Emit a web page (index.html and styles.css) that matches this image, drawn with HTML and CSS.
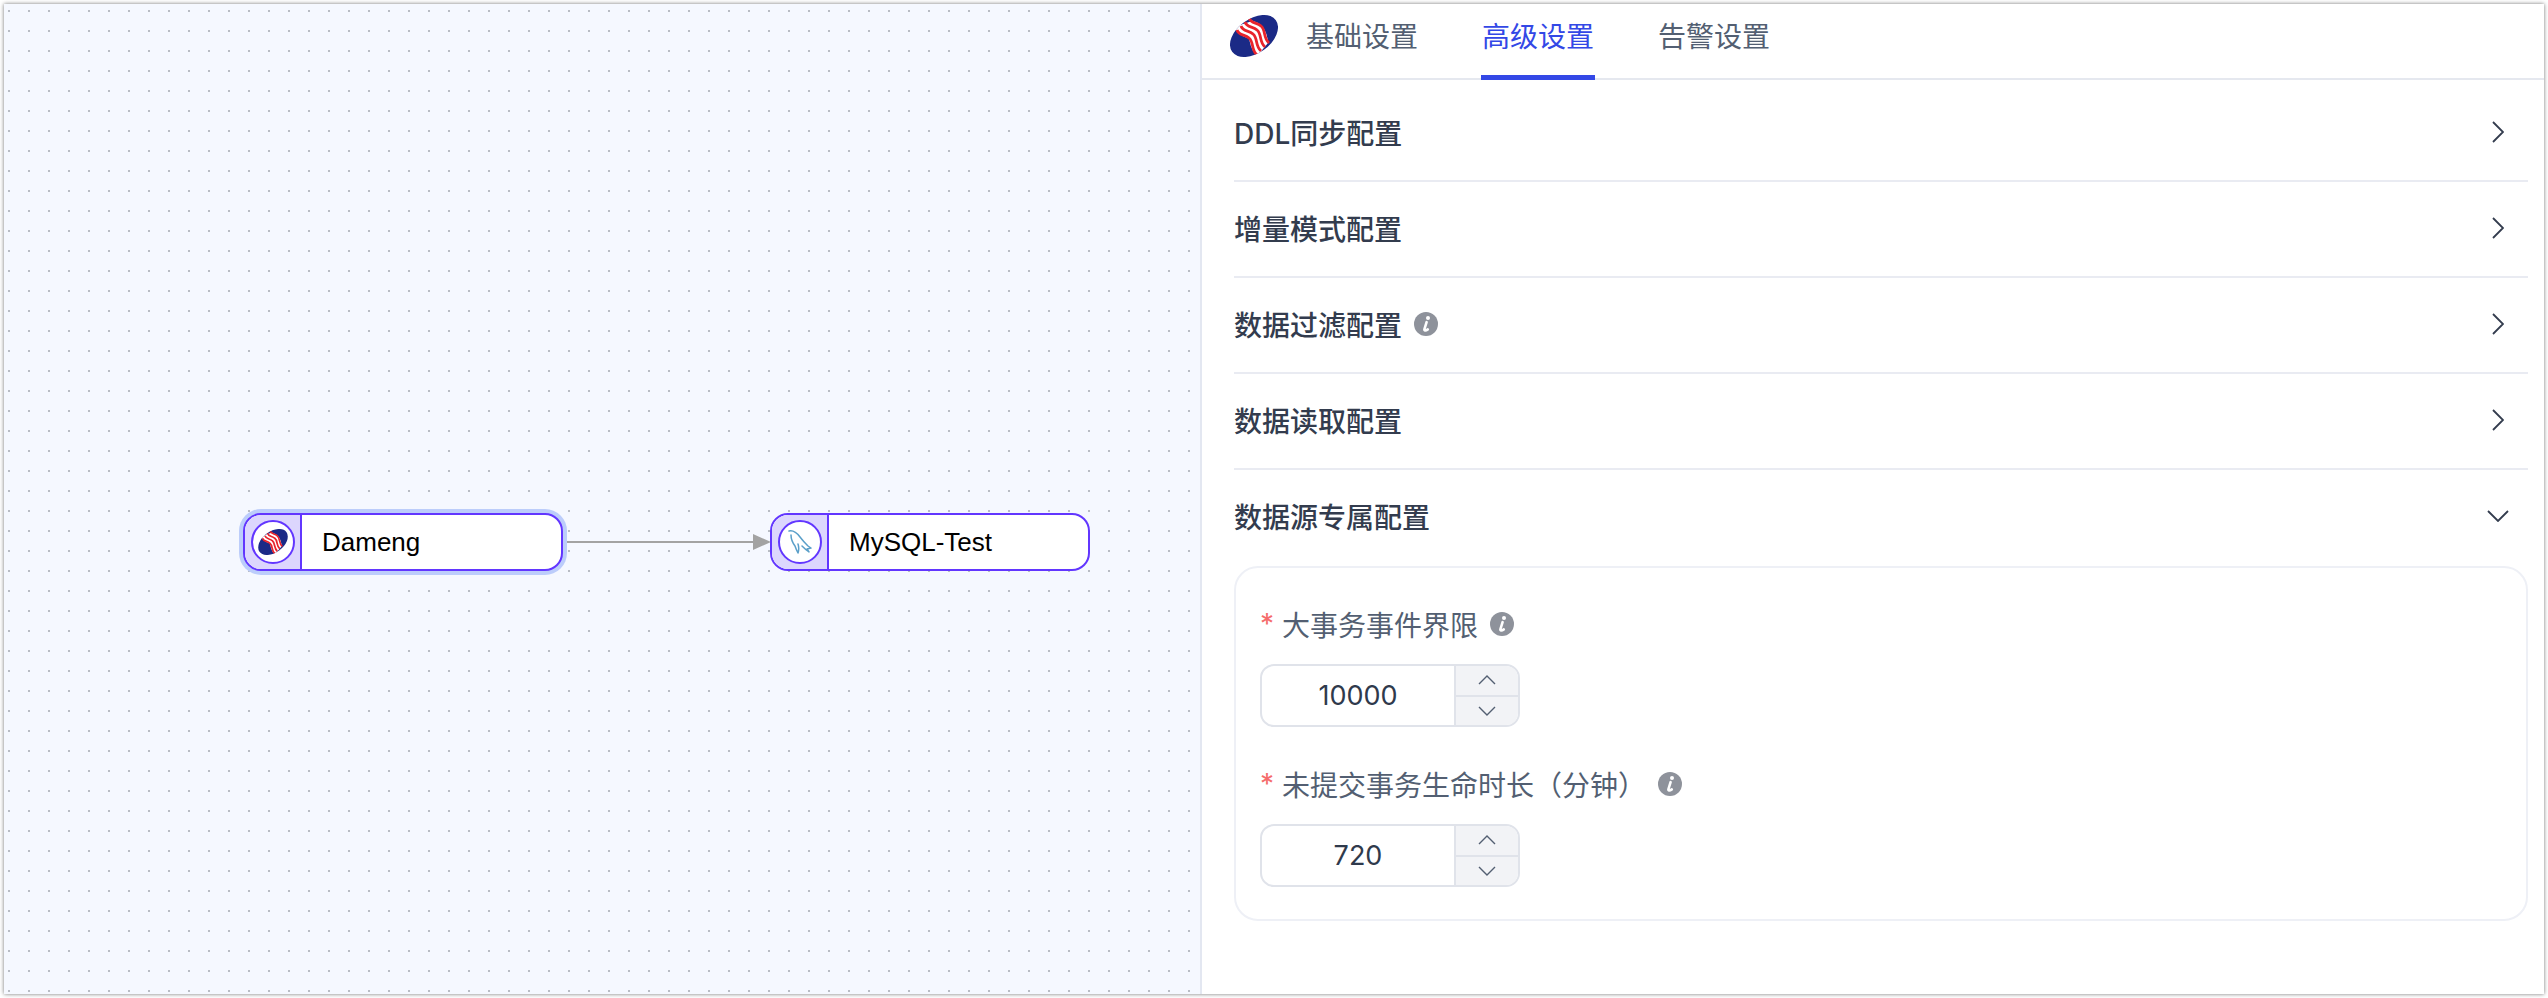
FILE: index.html
```html
<!DOCTYPE html>
<html lang="zh-CN">
<head>
  <meta charset="UTF-8">
  <title>高级设置</title>
  <link rel="stylesheet" href="styles.css">
</head>
<body>

<svg class="sprites" width="0" height="0">
  <defs>
    <clipPath id="dameng-clip">
      <ellipse cx="24" cy="21" rx="27" ry="17" transform="rotate(-36 24 21)"/>
    </clipPath>
    <path id="dameng-wave" d="M7 15C9 21 15 19 19 23C24 27 21 35 27 40"/>
  </defs>
  <symbol id="dameng" viewBox="0 0 48 42">
    <g clip-path="url(#dameng-clip)">
      <rect width="48" height="42" fill="#1b2a86"/>
      <use href="#dameng-wave" transform="translate(6 -6)" fill="none" stroke="#fff" stroke-width="18"/>
      <g fill="none" stroke="#e8232b" stroke-width="2.8">
        <use href="#dameng-wave"/>
        <use href="#dameng-wave" transform="translate(4 -4)"/>
        <use href="#dameng-wave" transform="translate(8 -8)"/>
        <use href="#dameng-wave" transform="translate(12 -12)"/>
      </g>
    </g>
  </symbol>
  <symbol id="dolphin" viewBox="0 0 24 24">
    <path d="M1 1C5 0 9 3 12 7C15 11 18 14 20 16L23 18L19 19L21 22C18 20 16 18 14 16M3 5C3 9 4 12 7 16C8 19 9 21 10 23C11 20 11 17 10 14" fill="none" stroke="#5a9fc9" stroke-width="1.5" stroke-linejoin="round" stroke-linecap="round"/>
  </symbol>
  <symbol id="info" viewBox="0 0 24 24">
    <circle cx="12" cy="12" r="12" fill="#8e929b"/>
    <circle cx="14" cy="6" r="2" fill="#fff"/>
    <path d="M12.6 10.2L10.4 17.2C10.1 18.8 11.6 19 13.8 17.4" fill="none" stroke="#fff" stroke-width="2.6" stroke-linecap="round"/>
  </symbol>
  <symbol id="chev-right" viewBox="0 0 12 22">
    <path d="M1 1L11 11L1 21" fill="none" stroke="#333c4e" stroke-width="1.8"/>
  </symbol>
  <symbol id="chev-down" viewBox="0 0 22 12">
    <path d="M1 1L11 11L21 1" fill="none" stroke="#333c4e" stroke-width="1.8"/>
  </symbol>
  <symbol id="step-up" viewBox="0 0 18 10">
    <path d="M1 9L9 1L17 9" fill="none" stroke="#535f72" stroke-width="1.4"/>
  </symbol>
  <symbol id="step-down" viewBox="0 0 18 10">
    <path d="M1 1L9 9L17 1" fill="none" stroke="#535f72" stroke-width="1.4"/>
  </symbol>
</svg>

<div class="app">
  <div class="canvas">
    <svg class="edge" width="240" height="30">
      <line x1="0" y1="15" x2="195" y2="15" stroke="#a3a3a3" stroke-width="2"/>
      <polygon points="191,7 209,15 191,23" fill="#a3a3a3"/>
    </svg>

    <div class="node node-source">
      <div class="node-icon">
        <span class="node-logo"><svg width="30" height="26"><use href="#dameng"/></svg></span>
      </div>
      <div class="node-name">Dameng</div>
    </div>

    <div class="node node-target">
      <div class="node-icon">
        <span class="node-logo"><svg width="24" height="24"><use href="#dolphin"/></svg></span>
      </div>
      <div class="node-name">MySQL-Test</div>
    </div>
  </div>

  <div class="panel">
    <div class="tabs">
      <svg class="tabs-logo" width="48" height="42"><use href="#dameng"/></svg>
      <div class="tab">基础设置</div>
      <div class="tab active">高级设置</div>
      <div class="tab">告警设置</div>
    </div>

    <div class="collapse">
      <div class="item">
        <div class="item-title">DDL同步配置</div>
        <svg class="chev" width="12" height="22"><use href="#chev-right"/></svg>
      </div>
      <div class="item">
        <div class="item-title">增量模式配置</div>
        <svg class="chev" width="12" height="22"><use href="#chev-right"/></svg>
      </div>
      <div class="item">
        <div class="item-title">数据过滤配置<svg class="info" width="24" height="24"><use href="#info"/></svg></div>
        <svg class="chev" width="12" height="22"><use href="#chev-right"/></svg>
      </div>
      <div class="item">
        <div class="item-title">数据读取配置</div>
        <svg class="chev" width="12" height="22"><use href="#chev-right"/></svg>
      </div>
      <div class="item item-open">
        <div class="item-title">数据源专属配置</div>
        <svg class="chev-open" width="22" height="12"><use href="#chev-down"/></svg>
      </div>

      <div class="form-box">
        <div class="field">
          <label class="field-label"><span class="req">*</span>大事务事件界限<svg class="info" width="24" height="24"><use href="#info"/></svg></label>
          <div class="number">
            <div class="number-value">10000</div>
            <div class="number-steps">
              <div class="step"><svg width="18" height="10"><use href="#step-up"/></svg></div>
              <div class="step"><svg width="18" height="10"><use href="#step-down"/></svg></div>
            </div>
          </div>
        </div>
        <div class="field">
          <label class="field-label"><span class="req">*</span>未提交事务生命时长（分钟）<svg class="info" width="24" height="24"><use href="#info"/></svg></label>
          <div class="number">
            <div class="number-value">720</div>
            <div class="number-steps">
              <div class="step"><svg width="18" height="10"><use href="#step-up"/></svg></div>
              <div class="step"><svg width="18" height="10"><use href="#step-down"/></svg></div>
            </div>
          </div>
        </div>
      </div>
    </div>
  </div>
</div>

</body>
</html>
```

FILE: styles.css
```css
html, body {
  margin: 0;
  padding: 0;
  height: 100%;
  background: #fff;
  font-family: Inter, "Noto Sans CJK SC", sans-serif;
}

body {
  padding: 4px;
  box-sizing: border-box;
  overflow: hidden;
}

.sprites {
  position: absolute;
}

.app {
  display: flex;
  height: 990px;
  box-shadow: 0 0 4px rgba(0, 0, 0, 0.55);
}

/* canvas, the dots are where the two stripe layers cross */
.canvas {
  position: relative;
  width: 1196px;
  flex: none;
  background-color: #f5f8ff;
  background-image:
    linear-gradient(to bottom, transparent 2px, #f5f8ff 2px),
    linear-gradient(to right, #b8bcc4 2px, #f5f8ff 2px);
  background-size: 20px 20px;
  background-position: 0 6px, 4px 0;
  border-right: 2px solid #e3e7f1;
}

.edge {
  position: absolute;
  left: 558px;
  top: 523px;
}

.node {
  position: absolute;
  top: 509px;
  width: 320px;
  height: 58px;
  box-sizing: border-box;
  display: flex;
  background: #fff;
  border: 2px solid #6236ff;
  border-radius: 18px;
}

.node-source {
  left: 239px;
  box-shadow: 0 0 0 4px #bccdfb;
}

.node-target {
  left: 766px;
}

.node-icon {
  width: 57px;
  box-sizing: border-box;
  flex: none;
  display: flex;
  align-items: center;
  justify-content: center;
  background: #dcd6fd;
  border-right: 2px solid #6236ff;
  border-radius: 16px 0 0 16px;
}

.node-logo {
  width: 44px;
  height: 44px;
  box-sizing: border-box;
  display: flex;
  align-items: center;
  justify-content: center;
  background: #fff;
  border: 2px solid #6236ff;
  border-radius: 50%;
}

.node-name {
  padding-left: 20px;
  line-height: 54px;
  font-family: "Liberation Sans", sans-serif;
  font-size: 26px;
  color: #000;
}

/* right panel */
.panel {
  flex: 1;
  min-width: 0;
  background: #fff;
}

.tabs {
  display: flex;
  gap: 62px;
  height: 74px;
  padding-left: 29px;
  border-bottom: 2px solid #e5e8ef;
  position: relative;
}

.tabs-logo {
  position: absolute;
  left: 28px;
  top: 11px;
}

.tab {
  font-size: 28px;
  line-height: 66px;
  height: 71px;
  color: #535f72;
  padding: 0 1px;
}

.tab:first-of-type {
  margin-left: 74px;
}

.active {
  color: #3348e6;
  border-bottom: 5px solid #3348e6;
}

.collapse {
  padding: 6px 16px 0 32px;
}

.item {
  height: 92px;
  padding-bottom: 2px;
  display: flex;
  align-items: center;
  justify-content: space-between;
  border-bottom: 2px solid #e9ebf2;
}

.item-open {
  border-bottom: none;
}

.item-title {
  display: flex;
  align-items: center;
  font-size: 28px;
  font-weight: 500;
  color: #333c4e;
}

.info {
  margin-left: 12px;
}

.chev {
  margin-right: 24px;
}

.chev-open {
  margin-right: 19px;
}

.form-box {
  box-sizing: border-box;
  height: 355px;
  margin-top: 2px;
  padding: 34px 24px 0;
  border: 2px solid #eef0f6;
  border-radius: 24px;
}

.field {
  margin-bottom: 35px;
}

.field-label {
  display: flex;
  align-items: center;
  height: 44px;
  margin-bottom: 18px;
  font-size: 28px;
  color: #535f72;
}

.req {
  width: 22px;
  color: #f56c6c;
}

.number {
  display: flex;
  width: 260px;
  height: 63px;
  box-sizing: border-box;
  border: 2px solid #e0e3ea;
  border-radius: 14px;
  overflow: hidden;
}

.number-value {
  flex: 1;
  text-align: center;
  line-height: 59px;
  font-size: 27px;
  color: #2f3a4c;
}

.number-steps {
  width: 64px;
  box-sizing: border-box;
  flex: none;
  display: flex;
  flex-direction: column;
  background: #f2f3f6;
  border-left: 2px solid #e0e3ea;
}

.step {
  flex: 1;
  display: flex;
  align-items: center;
  justify-content: center;
}

.step + .step {
  border-top: 2px solid #e0e3ea;
}
```
